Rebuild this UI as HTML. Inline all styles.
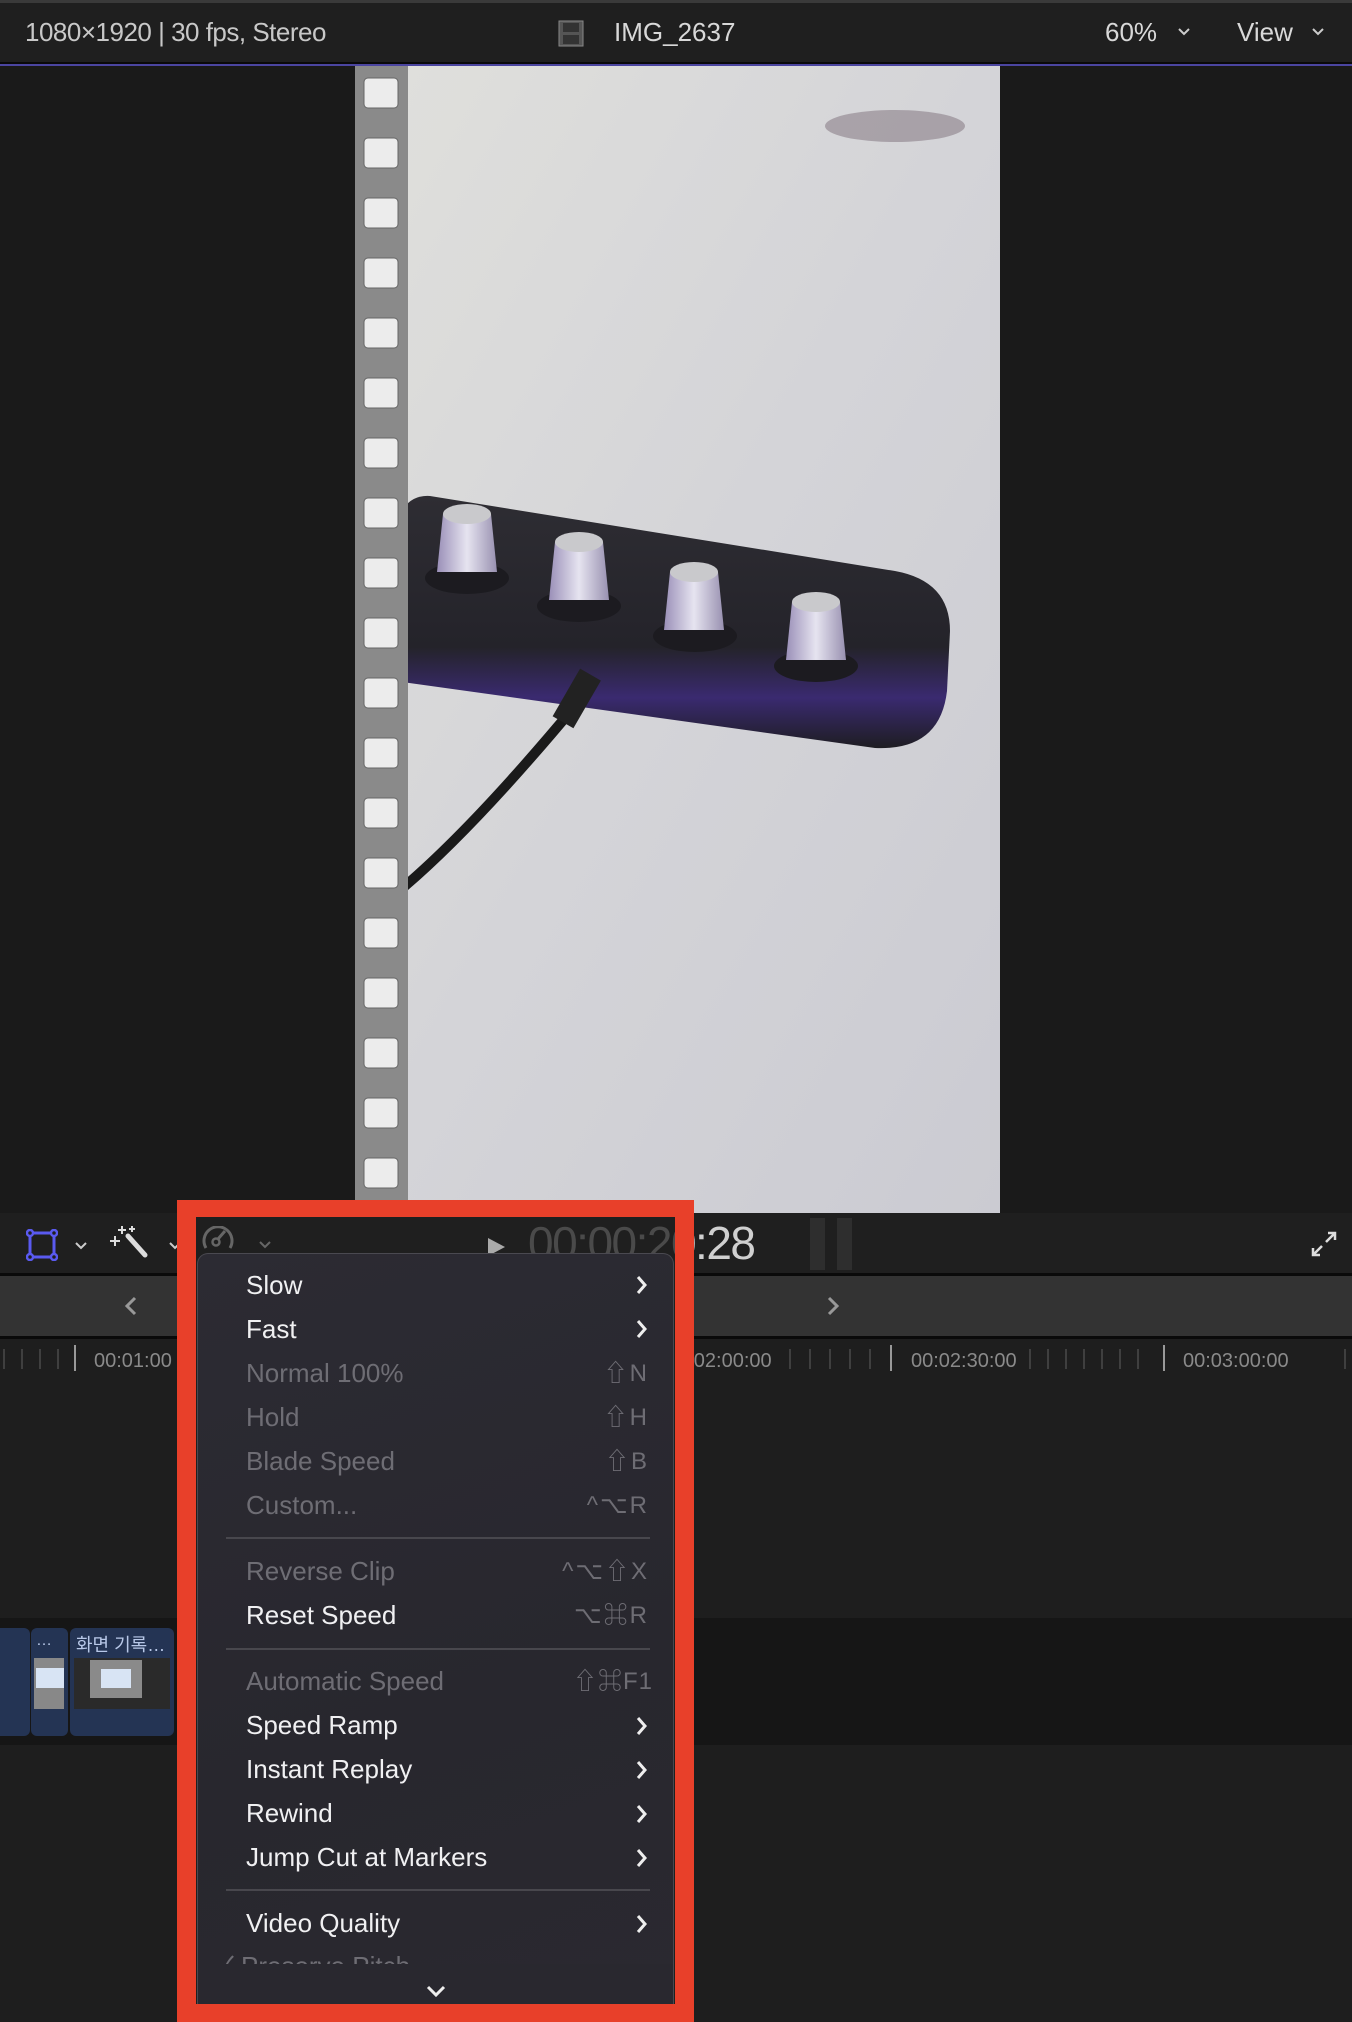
<!DOCTYPE html>
<html><head><meta charset="utf-8"><style>
*{margin:0;padding:0;box-sizing:border-box}
body{width:1352px;height:2022px;background:#1e1e1e;position:relative;overflow:hidden;font-family:"Liberation Sans","Noto Sans CJK KR",sans-serif}
.a{position:absolute}
.mi{position:absolute;left:245px;font-size:26px;color:#f0f0f2;line-height:30px}
.dim{color:#6e6d74}
.sep{position:absolute;left:28px;width:424px;height:2px;background:#48474d}
.sh{position:absolute;right:24px;font-size:24px;color:#6e6d74;text-align:right;line-height:44px;letter-spacing:2px}
.tc{font-size:46px;font-weight:300;letter-spacing:-1.5px;white-space:nowrap}
</style></head><body>
<div class="a" style="left:0;top:0;width:1352px;height:3px;background:#3a3a3a"></div>
<div class="a" style="left:0;top:3px;width:1352px;height:59px;background:#1f1f1f"></div>
<div class="a" style="left:0;top:62px;width:1352px;height:2px;background:#0a0a0a"></div>
<div class="a" style="left:0;top:64px;width:1352px;height:2px;background:#4b45a0"></div>
<div class="a" style="left:25px;top:17px;font-size:26px;color:#c8c8c8;letter-spacing:-0.5px">1080×1920 | 30 fps, Stereo</div>
<svg class="a" style="left:558px;top:20px" width="26" height="27"><rect x="1" y="1" width="24" height="25" fill="#555" stroke="#888"/><rect x="5" y="3" width="16" height="9" fill="#333"/><rect x="5" y="15" width="16" height="9" fill="#333"/></svg>
<div class="a" style="left:614px;top:17px;font-size:26px;color:#d8d8d8">IMG_2637</div>
<div class="a" style="left:1105px;top:17px;font-size:26px;color:#d8d8d8">60%</div>
<svg class="a" style="left:1177px;top:27px" width="14" height="10"><path d="M2 2l5 5 5-5" stroke="#ccc" stroke-width="2" fill="none"/></svg>
<div class="a" style="left:1237px;top:17px;font-size:26px;color:#d8d8d8">View</div>
<svg class="a" style="left:1311px;top:27px" width="14" height="10"><path d="M2 2l5 5 5-5" stroke="#ccc" stroke-width="2" fill="none"/></svg>
<div class="a" style="left:0;top:66px;width:1352px;height:1147px;background:#1a1a1a"></div>
<svg class="a" style="left:355px;top:66px" width="645" height="1147">
<defs><linearGradient id="bg" x1="0" y1="0" x2="1" y2="1"><stop offset="0" stop-color="#e0e0dc"/><stop offset="0.5" stop-color="#d4d4d8"/><stop offset="1" stop-color="#cbcbd2"/></linearGradient>
<linearGradient id="kn" x1="0" x2="1"><stop offset="0" stop-color="#9a8fb8"/><stop offset="0.5" stop-color="#e6e4f0"/><stop offset="1" stop-color="#9890b0"/></linearGradient>
<linearGradient id="dv" x1="0" y1="0" x2="0" y2="1"><stop offset="0" stop-color="#2e2d33"/><stop offset="0.6" stop-color="#24232a"/><stop offset="0.8" stop-color="#3a2a70"/><stop offset="1" stop-color="#1e1d22"/></linearGradient></defs>
<rect width="645" height="1147" fill="url(#bg)"/>
<ellipse cx="540" cy="60" rx="70" ry="16" fill="#8a7f88" opacity="0.6"/>
<path d="M75 430 L540 505 Q595 515 595 565 L592 625 Q585 685 520 682 L40 615 L40 470 Q45 428 75 430Z" fill="url(#dv)"/>
<path d="M220 640 Q120 760 50 820 Q10 860 0 910" stroke="#1a1a1a" stroke-width="10" fill="none"/>
<rect x="210" y="605" width="24" height="55" fill="#222" transform="rotate(30 222 632)"/>
<g fill="#1c1b20"><ellipse cx="112" cy="512" rx="42" ry="16"/><ellipse cx="224" cy="540" rx="42" ry="16"/><ellipse cx="340" cy="570" rx="42" ry="16"/><ellipse cx="461" cy="600" rx="42" ry="16"/></g>
<g fill="url(#kn)"><path d="M88 448h48l6 58h-60z"/><path d="M200 476h48l6 58h-60z"/><path d="M315 506h48l6 58h-60z"/><path d="M437 536h48l6 58h-60z"/></g>
<g fill="#c9c9cc"><ellipse cx="112" cy="448" rx="24" ry="10"/><ellipse cx="224" cy="476" rx="24" ry="10"/><ellipse cx="339" cy="506" rx="24" ry="10"/><ellipse cx="461" cy="536" rx="24" ry="10"/></g>
<rect x="0" y="0" width="53" height="1147" fill="#8a8a8a"/>
<g fill="#ececec" stroke="#666" stroke-width="1">
<rect x="9" y="12" width="34" height="30" rx="4"/><rect x="9" y="72" width="34" height="30" rx="4"/><rect x="9" y="132" width="34" height="30" rx="4"/><rect x="9" y="192" width="34" height="30" rx="4"/><rect x="9" y="252" width="34" height="30" rx="4"/><rect x="9" y="312" width="34" height="30" rx="4"/><rect x="9" y="372" width="34" height="30" rx="4"/><rect x="9" y="432" width="34" height="30" rx="4"/><rect x="9" y="492" width="34" height="30" rx="4"/><rect x="9" y="552" width="34" height="30" rx="4"/><rect x="9" y="612" width="34" height="30" rx="4"/><rect x="9" y="672" width="34" height="30" rx="4"/><rect x="9" y="732" width="34" height="30" rx="4"/><rect x="9" y="792" width="34" height="30" rx="4"/><rect x="9" y="852" width="34" height="30" rx="4"/><rect x="9" y="912" width="34" height="30" rx="4"/><rect x="9" y="972" width="34" height="30" rx="4"/><rect x="9" y="1032" width="34" height="30" rx="4"/><rect x="9" y="1092" width="34" height="30" rx="4"/></g>
</svg>
<div class="a" style="left:0;top:1213px;width:1352px;height:60px;background:#1f1f1f"></div>
<div class="a" style="left:0;top:1273px;width:1352px;height:3px;background:#0a0a0a"></div>
<svg class="a" style="left:26px;top:1229px" width="32" height="32"><rect x="4" y="4" width="24" height="24" fill="none" stroke="#5a5af0" stroke-width="3"/><g fill="#1f1f1f" stroke="#5a5af0" stroke-width="2.5"><circle cx="4" cy="4" r="3"/><circle cx="28" cy="4" r="3"/><circle cx="4" cy="28" r="3"/><circle cx="28" cy="28" r="3"/></g></svg>
<svg class="a" style="left:74px;top:1241px" width="14" height="10"><path d="M2 2l5 5 5-5" stroke="#ccc" stroke-width="2" fill="none"/></svg>
<svg class="a" style="left:110px;top:1224px" width="40" height="36"><path d="M18 12 L35 31" stroke="#ddd" stroke-width="5" stroke-linecap="round"/><path d="M12 2v8M8 6h8M5 12v10M0 17h10M22 2v6M19 5h6" stroke="#ddd" stroke-width="2"/></svg>
<svg class="a" style="left:168px;top:1241px" width="14" height="10"><path d="M2 2l5 5 5-5" stroke="#ccc" stroke-width="2" fill="none"/></svg>
<div class="a" style="left:810px;top:1218px;width:15px;height:52px;background:#2e2e2e"></div>
<div class="a" style="left:837px;top:1218px;width:15px;height:52px;background:#2e2e2e"></div>
<div class="a tc" style="left:528px;top:1216px;color:#d0d0d0">00:00:20:28</div>
<svg class="a" style="left:1310px;top:1230px" width="28" height="28"><path d="M16 12L25 3M18 3h7v7M12 16L3 25M3 18v7h7" stroke="#ddd" stroke-width="2.5" fill="none"/></svg>
<div class="a" style="left:0;top:1276px;width:1352px;height:60px;background:#333"></div>
<div class="a" style="left:0;top:1336px;width:1352px;height:3px;background:#0a0a0a"></div>
<svg class="a" style="left:124px;top:1296px" width="14" height="20"><path d="M11 2L3 10l8 8" stroke="#999" stroke-width="3" fill="none"/></svg>
<svg class="a" style="left:826px;top:1296px" width="14" height="20"><path d="M3 2l8 8-8 8" stroke="#999" stroke-width="3" fill="none"/></svg>
<svg class="a" style="left:0;top:1339px" width="1352" height="40">
<g stroke="#4a4a4a" stroke-width="1.5">
<path d="M4 10v20M22 10v20M40 10v20M58 10v20M790 10v20M810 10v20M830 10v20M850 10v20M870 10v20M1030 10v20M1048 10v20M1066 10v20M1084 10v20M1102 10v20M1120 10v20M1138 10v20M1345 10v20"/></g>
<g stroke="#999" stroke-width="2"><path d="M75 6v26M891 6v26M1164 6v26"/></g>
<g fill="#8a8a8a" font-size="20" font-family="Liberation Sans,sans-serif"><text x="94" y="28">00:01:00</text><text x="666" y="28">00:02:00:00</text><text x="911" y="28">00:02:30:00</text><text x="1183" y="28">00:03:00:00</text></g></svg>
<div class="a" style="left:0;top:1618px;width:1352px;height:127px;background:#161616"></div>
<div class="a" style="left:0;top:1628px;width:30px;height:108px;background:#243454;border-radius:0 6px 6px 0"></div>
<div class="a" style="left:31px;top:1628px;width:37px;height:108px;background:#243454;border-radius:6px"></div>
<div class="a" style="left:70px;top:1628px;width:104px;height:108px;background:#243454;border-radius:6px"></div>
<div class="a" style="left:36px;top:1632px;font-size:16px;color:#b8c8e8">…</div>
<div class="a" style="left:76px;top:1631px;font-size:18px;color:#b8c8e8">화면 기록…</div>
<div class="a" style="left:34px;top:1658px;width:30px;height:51px;background:#888"></div>
<div class="a" style="left:36px;top:1668px;width:28px;height:20px;background:#d8e4f4"></div>
<div class="a" style="left:74px;top:1658px;width:96px;height:51px;background:#2a2a2a"></div>
<div class="a" style="left:90px;top:1660px;width:52px;height:38px;background:#8a8a8a"></div>
<div class="a" style="left:101px;top:1669px;width:30px;height:19px;background:#d8e4f4"></div>
<div class="a" style="left:177px;top:1200px;width:517px;height:822px;background:#e8402a"></div>
<div class="a" style="left:196px;top:1217px;width:479px;height:787px;background:#1f1f1f;overflow:hidden">
<div class="a tc" style="left:332px;top:-1px;color:#4a4a4a">00:00:20:28</div>
</div>
<svg class="a" style="left:200px;top:1226px" width="36" height="24"><path d="M6 22A14 14 0 1 1 30 22" stroke="#666" stroke-width="3" fill="none"/><circle cx="16" cy="16" r="3.5" stroke="#666" stroke-width="2.5" fill="none"/><path d="M18 13l7-8" stroke="#666" stroke-width="3"/></svg>
<svg class="a" style="left:258px;top:1240px" width="14" height="10"><path d="M2 2l5 5 5-5" stroke="#666" stroke-width="2" fill="none"/></svg>
<svg class="a" style="left:488px;top:1238px" width="18" height="18"><path d="M0 0L17 9 0 18Z" fill="#aaa"/></svg>
<div class="a" style="left:197px;top:1253px;width:477px;height:751px;background:linear-gradient(160deg,#2c2b33,#28272e 60%,#2a2930);border:1px solid #4a4950;border-bottom:none;border-radius:11px 11px 0 0;overflow:hidden">
<div style="position:absolute;left:-197px;top:-1253px;width:1352px;height:2022px">
<div class="mi" style="top:1269px">Slow</div>
<div class="mi" style="top:1313px">Fast</div>
<div class="mi dim" style="top:1357px">Normal 100%</div>
<div class="mi dim" style="top:1401px">Hold</div>
<div class="mi dim" style="top:1445px">Blade Speed</div>
<div class="mi dim" style="top:1489px">Custom...</div>
<div class="mi dim" style="top:1555px">Reverse Clip</div>
<div class="mi" style="top:1599px">Reset Speed</div>
<div class="mi dim" style="top:1665px">Automatic Speed</div>
<div class="mi" style="top:1709px">Speed Ramp</div>
<div class="mi" style="top:1753px">Instant Replay</div>
<div class="mi" style="top:1797px">Rewind</div>
<div class="mi" style="top:1841px">Jump Cut at Markers</div>
<div class="mi" style="top:1907px">Video Quality</div>
<div class="mi dim" style="top:1950px;left:215px">✓&nbsp;Preserve Pitch</div>
</div>
<div class="sep" style="top:283px"></div>
<div class="sep" style="top:394px"></div>
<div class="sep" style="top:635px"></div>
<div style="position:absolute;left:0;top:710px;width:477px;height:45px;background:#29282f"></div>
<svg style="position:absolute;left:228px;top:731px" width="20" height="12"><path d="M2 2l8 8 8-8" stroke="#eee" stroke-width="3" fill="none"/></svg>
<svg style="position:absolute;left:0;top:0" width="477" height="751" fill="none" stroke="#eee" stroke-width="3">
<path d="M440 23l7 8-7 8M440 67l7 8-7 8M440 464l7 8-7 8M440 508l7 8-7 8M440 552l7 8-7 8M440 596l7 8-7 8M440 662l7 8-7 8"/></svg>
<div class="sh" style="top:98px">⇧N<br>⇧H<br>⇧B<br>^⌥R</div>
<div class="sh" style="top:296px">^⌥⇧X<br>⌥⌘R</div>
<div class="sh" style="top:406px;right:20px;letter-spacing:1px">⇧⌘F1</div>
</div>
</body></html>
